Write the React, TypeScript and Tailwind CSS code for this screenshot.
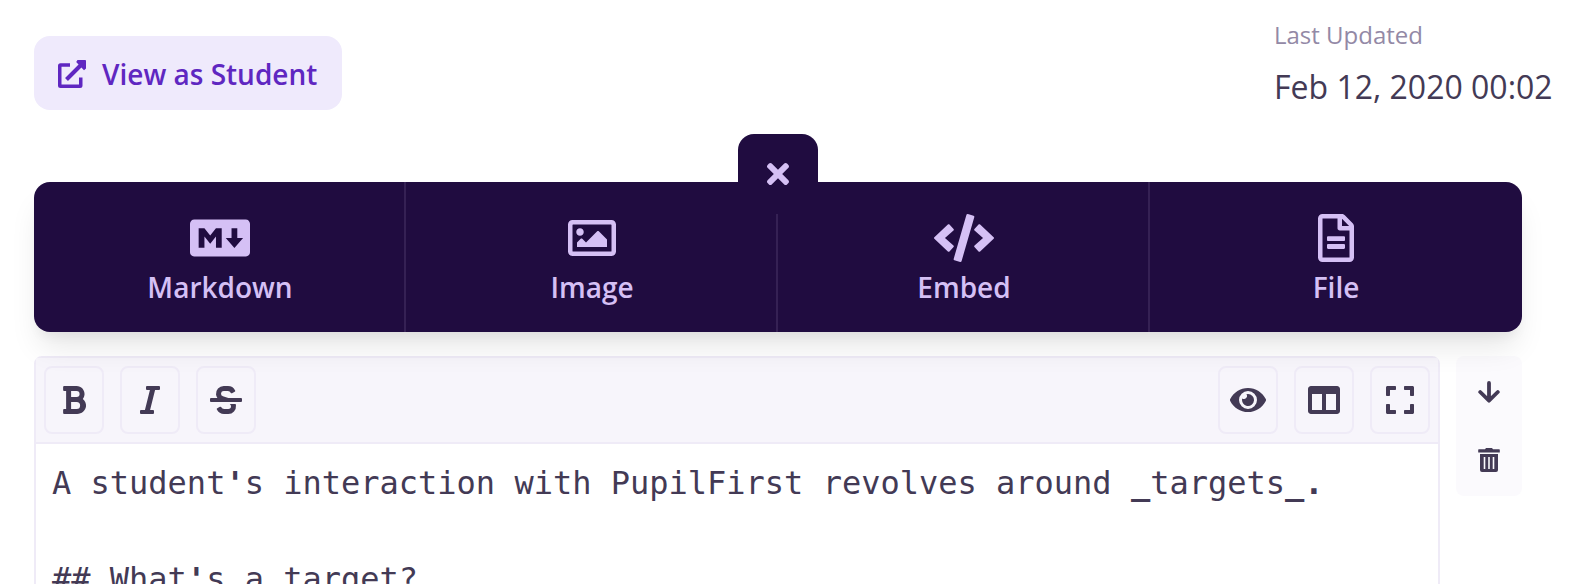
import React from "react";
import {
  FaTimes, FaMarkdown, FaRegImage, FaCode,
  FaBold, FaItalic, FaStrikethrough, FaEye, FaColumns, FaExpand,
} from "react-icons/fa";

function ExternalLinkIcon() {
  return (
    <svg width="28" height="28" viewBox="0 0 28 28" fill="none" stroke="currentColor" strokeLinejoin="round">
      <path d="M12 5H2.500Q1.750 5 1.750 5.750V25.500Q1.750 26.250 2.500 26.250H22Q22.750 26.250 22.750 25.500V17.500" strokeWidth="3.500" />
      <path d="M8.500 19.500L24 4" strokeWidth="4" />
      <path d="M19.500 0H27.200Q28 0 28 .800V8.500L26 10.300L18.200 2Z" fill="currentColor" stroke="none" />
    </svg>
  );
}

function FileIcon() {
  return (
    <svg width="36" height="48" viewBox="0 0 384 512" fill="currentColor">
      <path d="M288 248v28c0 6.600-5.400 12-12 12H108c-6.600 0-12-5.400-12-12v-28c0-6.600 5.400-12 12-12h168c6.600 0 12 5.400 12 12zm-12 72H108c-6.600 0-12 5.400-12 12v28c0 6.600 5.400 12 12 12h168c6.600 0 12-5.400 12-12v-28c0-6.600-5.400-12-12-12zm108-188.100V464c0 26.500-21.500 48-48 48H48c-26.500 0-48-21.500-48-48V48C0 21.500 21.500 0 48 0h204.100C264.800 0 277 5.100 286 14.100L369.900 98c9 8.900 14.100 21.200 14.100 33.900zm-128-80V128h76.100L256 51.900zM336 464V176H232c-13.300 0-24-10.700-24-24V48H48v416h288z" />
    </svg>
  );
}

function ArrowDownIcon() {
  return (
    <svg width="22" height="22" viewBox="0 0 22 22" fill="none" stroke="currentColor" strokeWidth="3.800" strokeLinecap="round" strokeLinejoin="round">
      <path d="M11 2V19M2.200 11L11 19.700L19.800 11" />
    </svg>
  );
}

function TrashIcon() {
  return (
    <svg width="22" height="24" viewBox="0 0 22 24" fill="currentColor" fillRule="evenodd">
      <path d="M7 1.300L8 0h6l1 1.300h6.200q.6 0 .6.600V4.500H.2V1.900q0-.6.6-.600z" />
      <path d="M2 6h18v16q0 2-2 2H4q-2 0-2-2zM5.700 9v12h1.600V9zM10.200 9v12h1.600V9zM14.700 9v12h1.600V9z" />
    </svg>
  );
}

function ToolButton({ children }: { children: React.ReactNode }) {
  return (
    <button className="flex h-[68px] w-[60px] items-center justify-center rounded-lg border-2 border-[#efebf7]">
      {children}
    </button>
  );
}

function BlockType({ icon, label, divider }: { icon: React.ReactNode; label: string; divider?: boolean }) {
  return (
    <div className={divider ? "flex flex-col items-center border-r-2 border-[#352154] pt-8 pl-0.5" : "flex flex-col items-center pt-8"}>
      <span className="flex h-12 items-center">{icon}</span>
      <span className="mt-[7px] text-[28px] leading-9 font-semibold">{label}</span>
    </div>
  );
}

function Mark({ children }: { children: string }) {
  return <span className="font-bold">{children}</span>;
}

export default function App() {
  return (
    <div className="flex h-[584px] flex-col overflow-hidden bg-white font-['Open_Sans',sans-serif] text-[#433a55]">
      <header className="flex h-[182px] shrink-0 items-start justify-between pl-[34px]">
        <button className="mt-9 flex h-[74px] w-[308px] items-center rounded-2xl bg-[#efeafc] pt-0.5 pl-6 text-[28px] font-semibold text-[#5f27c1]">
          <ExternalLinkIcon />
          <span className="ml-4 whitespace-nowrap">View as Student</span>
        </button>
        <div className="w-[310px] whitespace-nowrap pt-[17px]">
          <div className="text-[24px] leading-9 text-[#9389a6]">Last Updated</div>
          <div className="mt-2.5 text-[32px] leading-12">Feb 12, 2020 00:02</div>
        </div>
      </header>

      <section className="relative z-10 ml-[34px] grid h-[150px] w-[1488px] shrink-0 grid-cols-4 rounded-2xl bg-[#200c40] text-[#d5c0f5] shadow-[0_20px_30px_-6px_rgba(0,0,0,0.1),0_8px_12px_-4px_rgba(0,0,0,0.05)]">
        <BlockType icon={<FaMarkdown size={60} />} label="Markdown" divider />
        <BlockType icon={<FaRegImage size={48} />} label="Image" divider />
        <BlockType icon={<FaCode size={60} />} label="Embed" divider />
        <BlockType icon={<FileIcon />} label="File" />
        <button className="absolute -top-12 left-[704px] flex size-20 items-center justify-center rounded-t-2xl bg-[#200c40]">
          <FaTimes size={32} />
        </button>
      </section>

      <div className="mt-6 flex items-start gap-4 pl-[34px]">
        <section className="h-[300px] w-[1406px] rounded-t-lg border-2 border-[#efebf7]">
          <div className="flex h-[86px] items-center justify-between border-b-2 border-[#efebf7] bg-[#f7f5fb] px-2">
            <div className="flex gap-4">
              <ToolButton><FaBold size={32} /></ToolButton>
              <ToolButton><FaItalic size={32} /></ToolButton>
              <ToolButton><FaStrikethrough size={32} /></ToolButton>
            </div>
            <div className="flex gap-4">
              <ToolButton><FaEye className="shrink-0" size={36} /></ToolButton>
              <ToolButton><FaColumns size={32} /></ToolButton>
              <ToolButton><FaExpand size={32} /></ToolButton>
            </div>
          </div>
          <div className="px-4 pt-[15px] font-['DejaVu_Sans_Mono',monospace] text-[32px] leading-12 whitespace-pre">
            <p>A student<Mark>'</Mark>s interaction with PupilFirst revolves around <Mark>_</Mark>targets<Mark>_.</Mark></p>
            <p>{" "}</p>
            <p>## What<Mark>'</Mark>s a target?</p>
          </div>
        </section>
        <aside className="flex h-[140px] w-[66px] flex-col items-center rounded-lg bg-[#fbfafd] pt-[25px]">
          <ArrowDownIcon />
          <span className="mt-[45px]"><TrashIcon /></span>
        </aside>
      </div>
    </div>
  );
}
